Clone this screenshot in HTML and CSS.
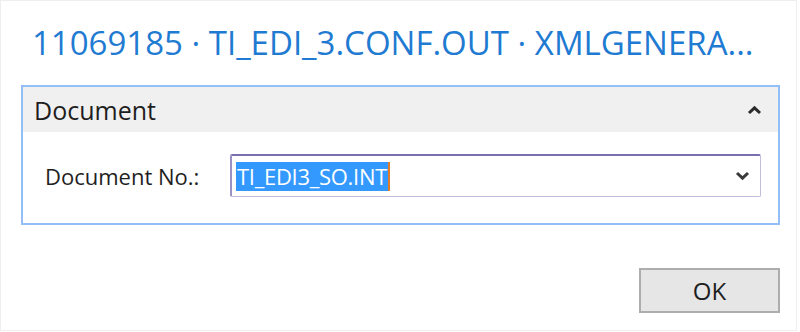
FILE: index.html
```html
<!DOCTYPE html>
<html>
<head>
    <title>Document</title>
<link rel="stylesheet" href="styles.css">
</head>
<body>
    <div class="dialog">
        <div class="dialogTitle">11069185 · TI_EDI_3.CONF.OUT · XMLGENERA...</div>

        <div class="panel">
            <div class="panelHeader">
                <span>Document</span>
                <svg class="chevron" width="15" height="10" viewBox="0 0 15 10">
                    <path d="M2 8 L7.5 2.8 L13 8" fill="none" stroke="#2B2B2B" stroke-width="3"/>
                </svg>
            </div>
            <div class="panelBody">
                <label class="fieldLabel">Document No.:</label>
                <div class="combo">
                    <span class="comboValue"><span class="selected">TI_EDI3_SO.INT</span><span class="caret"></span></span>
                    <svg class="chevron" width="15" height="10" viewBox="0 0 15 10">
                        <path d="M2 2 L7.5 7.2 L13 2" fill="none" stroke="#3A3A3A" stroke-width="3"/>
                    </svg>
                </div>
            </div>
        </div>

        <div class="buttonRow">
            <button class="okButton">OK</button>
        </div>
    </div>
</body>
</html>
```

FILE: styles.css
```css
body {
	margin: 0;
	background-color: #FFFFFF;
	font-family: "Open Sans", "Noto Sans", sans-serif;
}

.dialog {
	width: 797px;
	height: 331px;
	box-sizing: border-box;
	border: 1px solid #EEEEEE;
	padding-top: 19px;
}

.dialogTitle {
	padding-left: 31px;
	font-size: 33px;
	line-height: 45px;
	color: #1F7BD2;
	white-space: nowrap;
}

.panel {
	margin: 20px 0 0 20px;
	width: 759px;
	height: 140px;
	box-sizing: border-box;
	border: 2px solid #93BEF7;
}

.panelHeader {
	display: flex;
	align-items: center;
	justify-content: space-between;
	height: 45px;
	padding: 0 16px 0 11px;
	background-color: #F0F0F0;
	font-size: 25px;
	color: #1E1E1E;
}

.panelBody {
	display: flex;
	align-items: center;
	padding: 22px 17px 0 22px;
}

.fieldLabel {
	width: 185px;
	font-size: 22px;
	color: #1E1E1E;
}

.combo {
	flex: 1;
	height: 43px;
	box-sizing: border-box;
	display: flex;
	align-items: center;
	justify-content: space-between;
	padding: 0 10px 0 4px;
	border: 1px solid #C2BDDD;
	border-top: 2px solid #7B6FB0;
	border-left: 2px solid #9A91C4;
	border-radius: 2px;
}

.comboValue {
	display: flex;
	align-items: center;
	font-size: 22px;
	letter-spacing: -0.3px;
}

.selected {
	background-color: #3399FF;
	color: #FFFFFF;
	line-height: 29px;
	padding: 0 1px;
}

.caret {
	width: 2px;
	height: 29px;
	background-color: #E07B2A;
}

.buttonRow {
	display: flex;
	justify-content: flex-end;
	padding: 43px 16px 0 0;
}

.okButton {
	width: 141px;
	height: 45px;
	border: 2px solid #ADADAD;
	background-color: #E6E6E6;
	font-family: "Open Sans", "Noto Sans", sans-serif;
	font-size: 24px;
	color: #1E1E1E;
}
```
